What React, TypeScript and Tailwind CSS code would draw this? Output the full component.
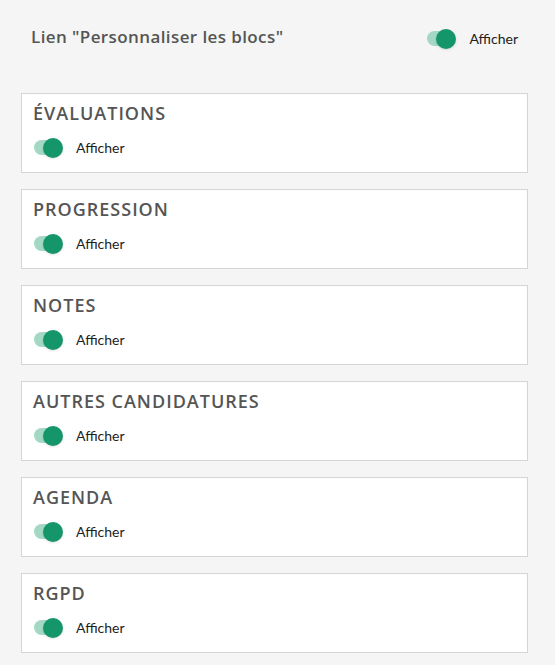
import React, { useState } from 'react';

const Toggle: React.FC<{ on: boolean; onClick: () => void }> = ({ on, onClick }) => (
  <button
    type="button"
    onClick={onClick}
    className="relative w-[30px] h-[20px] flex items-center cursor-pointer"
  >
    <span className={`block w-[28px] h-[15px] rounded-full ${on ? 'bg-[#a3d9c4]' : 'bg-[#d5d8d6]'}`} />
    <span
      className={`absolute top-0 w-[20px] h-[20px] rounded-full shadow-sm ${on ? 'left-[9px] bg-[#14966a]' : 'left-[-2px] bg-[#f0f0f0]'}`}
    />
  </button>
);

const blocks = ['Évaluations', 'Progression', 'Notes', 'Autres candidatures', 'Agenda', 'RGPD'];

export default function App() {
  const [linkOn, setLinkOn] = useState(true);
  const [shown, setShown] = useState<Record<string, boolean>>(
    Object.fromEntries(blocks.map((b) => [b, true]))
  );

  return (
    <div className="min-h-[665px] bg-[#f4f5f4] font-['Lato',sans-serif] text-[#555555]">
      {/* Header row */}
      <div className="flex justify-between pl-[31px] pr-[37px] pt-[24px] h-[76px] items-start">
        <h2 className="font-['Open_Sans',sans-serif] text-[17px] font-semibold tracking-[0.4px]">
          Lien "Personnaliser les blocs"
        </h2>
        <div className="flex items-center gap-[12px] mt-[4px]">
          <Toggle on={linkOn} onClick={() => setLinkOn(!linkOn)} />
          <span className="text-[14px] text-[#222]">Afficher</span>
        </div>
      </div>

      {/* Blocks */}
      <div className="flex flex-col gap-[16px] pl-[21px] pr-[27px] pt-[17px]">
        {blocks.map((b) => (
          <div key={b} className="h-[80px] bg-white border border-[#d4d6d5] px-[11px] pt-[7px]">
            <div className="font-['Open_Sans',sans-serif] text-[18px] font-semibold uppercase tracking-[1px] leading-[24px]">
              {b}
            </div>
            <div className="flex items-center gap-[12px] mt-[12px] pl-[1px]">
              <Toggle on={shown[b]} onClick={() => setShown({ ...shown, [b]: !shown[b] })} />
              <span className="text-[14px] text-[#222]">Afficher</span>
            </div>
          </div>
        ))}
      </div>
    </div>
  );
}
